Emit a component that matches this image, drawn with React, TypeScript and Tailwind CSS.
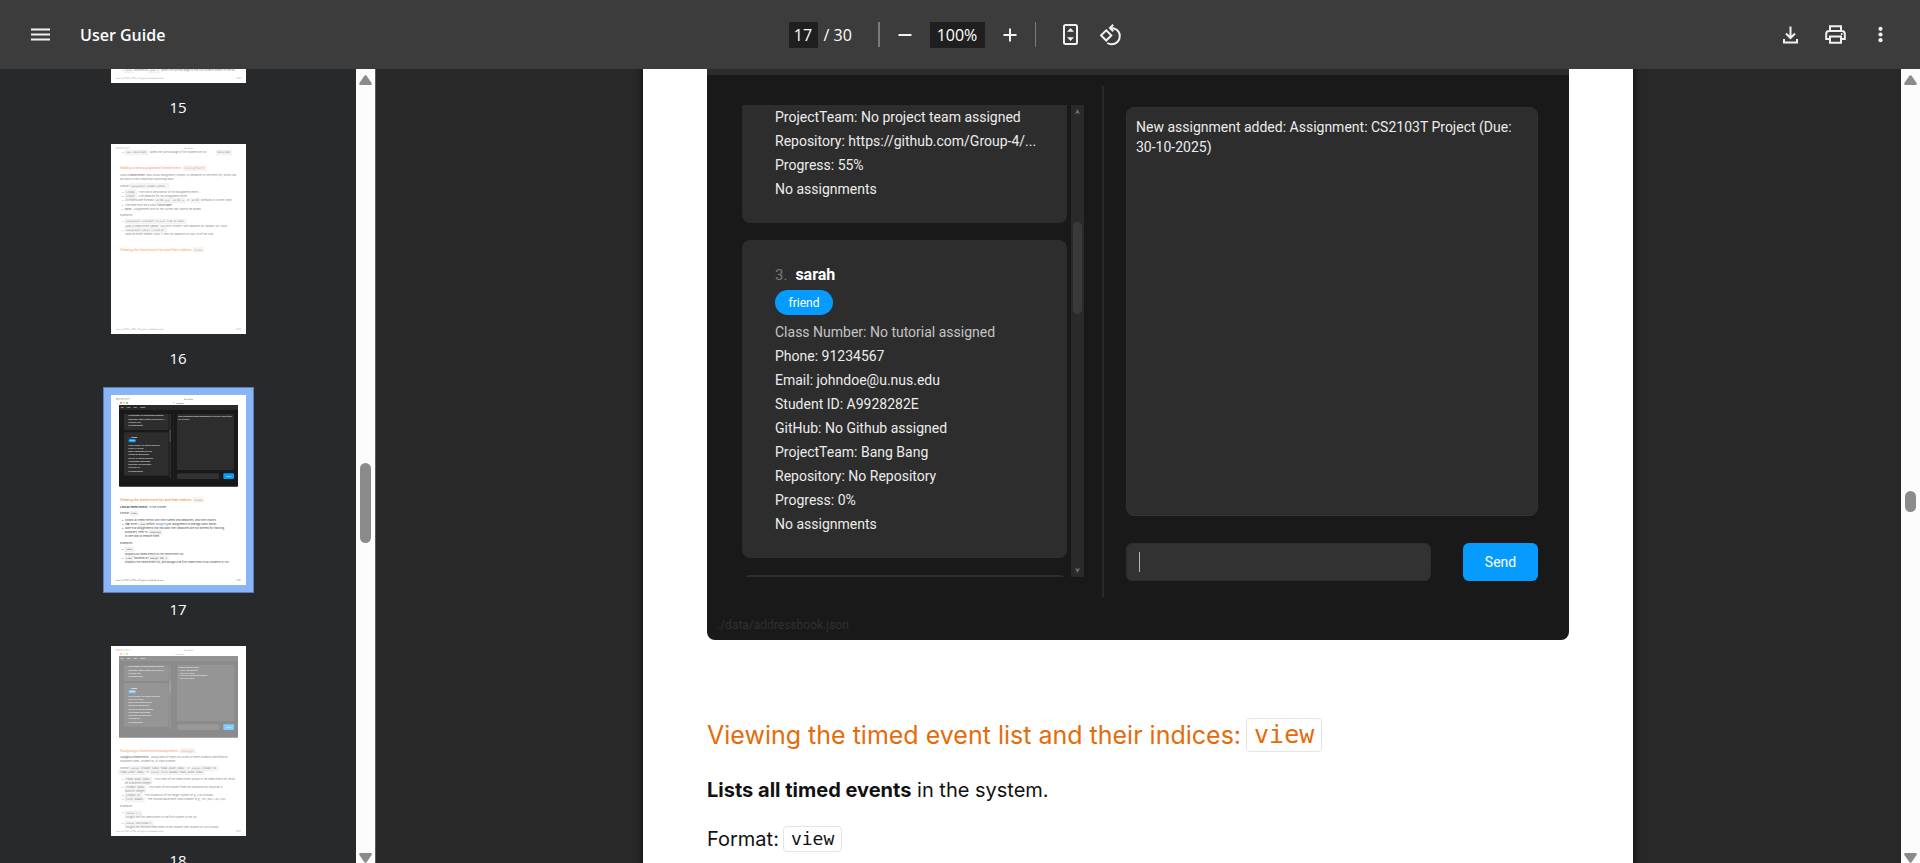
import type { ReactNode } from "react";

const UI_FONT = "font-['Segoe_UI','Open_Sans',sans-serif]";
const DOC_FONT = "font-['Inter',sans-serif]";
const APP_FONT = "font-['Roboto',sans-serif]";

/* ---------- toolbar ---------- */

function IconButton({ label, children, wide }: { label: string; children: ReactNode; wide?: boolean }) {
  return (
    <button
      type="button"
      aria-label={label}
      className={`flex h-10 items-center justify-center text-[#f1f1f1] ${wide ? "w-[45px]" : "w-10"}`}
    >
      {children}
    </button>
  );
}

function Toolbar() {
  return (
    <header className={`flex h-[69px] shrink-0 items-center bg-[#3c3c3c] text-base text-white ${UI_FONT}`}>
      <div className="flex flex-1 items-center gap-5 pl-5">
        <IconButton label="Menu">
          <svg width="19" height="13" viewBox="0 0 19 13" fill="currentColor">
            <rect x="0" y="0.5" width="19" height="2" />
            <rect x="0" y="5.5" width="19" height="2" />
            <rect x="0" y="10.5" width="19" height="2" />
          </svg>
        </IconButton>
        <h1 className="font-semibold">User Guide</h1>
      </div>

      <div className="flex items-center pr-1">
        <input
          aria-label="Page number"
          defaultValue="17"
          className="h-[26px] w-[29px] bg-[#1f1f1f] text-center outline-none"
        />
        <span className="w-[60px] pl-[6px]">/ 30</span>
        <span className="mr-[5px] h-[25px] w-[2px] bg-[#7a7a7a]" />
        <IconButton label="Zoom out">
          <svg width="14" height="14" viewBox="0 0 14 14" fill="currentColor">
            <rect x="0.5" y="6" width="13" height="2" />
          </svg>
        </IconButton>
        <input
          aria-label="Zoom level"
          defaultValue="100%"
          className="mx-[5px] h-[26px] w-[55px] bg-[#1f1f1f] text-center outline-none"
        />
        <IconButton label="Zoom in">
          <svg width="14" height="14" viewBox="0 0 14 14" fill="currentColor">
            <rect x="0.5" y="6" width="13" height="2" />
            <rect x="6" y="0.5" width="2" height="13" />
          </svg>
        </IconButton>
        <span className="mr-[15px] ml-[5px] h-[25px] w-px bg-[#7a7a7a]" />
        <IconButton label="Fit to page">
          <svg width="15" height="21" viewBox="0 0 15 21" fill="none">
            <rect x="1" y="1" width="13" height="19" rx="1.5" stroke="currentColor" strokeWidth="2" />
            <path d="M7.5 4 11 7.8H4ZM7.5 17 4 13.2h7Z" fill="currentColor" />
          </svg>
        </IconButton>
        <IconButton label="Rotate counterclockwise">
          <svg width="22" height="22" viewBox="0 0 22 22" fill="none" stroke="currentColor" strokeWidth="2">
            <path d="M6.2 6.3 11.3 11.4 6.2 16.5 1.1 11.4Z" />
            <path d="M10.5 3.9c5 0 9.3 3.1 9.3 8.1s-3.6 8.2-8.3 8.2c-1.6 0-2.9-.4-4.2-1.2" />
            <path d="M13.2 0.8 10 4 13.2 7.2" />
          </svg>
        </IconButton>
      </div>

      <div className="flex flex-1 items-center justify-end pr-[17px]">
        <IconButton label="Download" wide>
          <svg width="15" height="18" viewBox="0 0 15 18" fill="none" stroke="currentColor" strokeWidth="2">
            <path d="M7.5 0.5V11.5M3 7.5 7.5 12 12 7.5M1 13v3.5h13V13" />
          </svg>
        </IconButton>
        <IconButton label="Print" wide>
          <svg width="21" height="19" viewBox="0 0 21 19" fill="none" stroke="currentColor" strokeWidth="2">
            <path d="M5 6V1.2h11V6M5 14H1.2V9c0-1.7 1-3 2.8-3h13c1.8 0 2.8 1.3 2.8 3v5H16" />
            <path d="M5 11.5h11v6.2H5Z" />
            <circle cx="16.7" cy="8.9" r="1" fill="currentColor" stroke="none" />
          </svg>
        </IconButton>
        <IconButton label="More actions" wide>
          <svg width="5" height="17" viewBox="0 0 5 17" fill="currentColor">
            <circle cx="2.5" cy="2.8" r="2.1" />
            <circle cx="2.5" cy="8.5" r="2.1" />
            <circle cx="2.5" cy="14.2" r="2.1" />
          </svg>
        </IconButton>
      </div>
    </header>
  );
}

/* ---------- scroll bars ---------- */

function ScrollBar({ before, size, after }: { before: number; size: number; after: number }) {
  return (
    <div className="flex w-[19px] shrink-0 flex-col items-center bg-[#fcfcfc] pt-[6px]">
      <svg width="13" height="10" viewBox="0 0 13 10" fill="#8b8b8b">
        <path d="M5.6.6Q6.5-.3 7.4.6L12.6 8Q13.3 9.8 11.6 9.9H1.4Q-.3 9.8.4 8Z" />
      </svg>
      <div style={{ flexGrow: before }} />
      <div className="w-[11px] rounded-full bg-[#8b8b8b]" style={{ height: size }} />
      <div style={{ flexGrow: after }} />
      <svg width="13" height="10" viewBox="0 0 13 10" fill="#8b8b8b">
        <path d="M5.6 9.4Q6.5 10.3 7.4 9.4L12.6 2Q13.3.2 11.6.1H1.4Q-.3.2.4 2Z" />
      </svg>
    </div>
  );
}

/* ---------- thumbnails ---------- */

type Run = { x: number; y: number; t: string; mono?: boolean; bold?: boolean; w?: number; heading?: boolean };

function Runs({ runs, color, accent }: { runs: Run[]; color: string; accent: string }) {
  return (
    <>
      {runs.map((r, i) => (
        <g key={i}>
          {r.w ? (
            <rect x={r.x - 3} y={r.y - 9} width={r.w} height={13} rx="1" fill="#f6f6f6" stroke="#dedede" strokeWidth="1" />
          ) : null}
          <text
            x={r.x}
            y={r.y}
            fontSize={r.heading ? 10 : r.mono ? 7 : 8}
            fontWeight={r.bold ? 700 : r.heading ? 500 : 400}
            fontFamily={r.mono ? "DejaVu Sans Mono, monospace" : "Inter, sans-serif"}
            fill={r.heading ? accent : color}
          >
            {r.t}
          </text>
        </g>
      ))}
    </>
  );
}

function PageFrame({ page, children, faded }: { page: number; children: ReactNode; faded?: boolean }) {
  const c = faded ? "#999" : "#555";
  return (
    <svg width="135" height="190" viewBox="0 0 405 570" className="block bg-white" aria-hidden="true">
      <text x="15" y="15" fontSize="5" fill={c} fontFamily="Inter, sans-serif">09/11/2025, 16:22</text>
      <text x="220" y="15" fontSize="5" fill={c} fontFamily="Inter, sans-serif">User Guide</text>
      {children}
      <text x="15" y="558" fontSize="5" fill={c} fontFamily="Inter, sans-serif">https://ay2526s1-cs2103t-w11-4.github.io/tp/UserGuide.html</text>
      <text x="376" y="558" fontSize="5" fill={c} fontFamily="Inter, sans-serif">{`${page}/30`}</text>
    </svg>
  );
}

const contactLines = [
  "Class Number: No tutorial assigned",
  "Phone: 91234567",
  "Email: johndoe@u.nus.edu",
  "Student ID: A9928282E",
  "GitHub: No Github assigned",
  "ProjectTeam: Bang Bang",
  "Repository: No Repository",
  "Progress: 0%",
  "No assignments",
];

function MiniApp({ output, faded }: { output: string[]; faded?: boolean }) {
  return (
    <g fontFamily="Roboto, sans-serif" fontSize="6" opacity={faded ? 0.5 : 1}>
      <circle cx="30" cy="23.5" r="2.8" fill="#ff4f57" />
      <circle cx="39" cy="23.5" r="2.8" fill="#febc2e" />
      <circle cx="48" cy="23.5" r="2.8" fill="#28c840" />
      <circle cx="189" cy="23.5" r="2" fill="#e0b080" />
      <text x="195" y="26" fontSize="5" fill="#555">TeamBook</text>
      <rect x="24" y="30" width="357" height="245" rx="2" fill="#191919" />
      <rect x="24" y="30" width="357" height="15" fill="#2a2a2a" />
      <text x="29" y="39" fontSize="5" fill="#fff">File</text>
      <text x="47" y="39" fontSize="5" fill="#fff">View</text>
      <text x="67" y="39" fontSize="5" fill="#fff">Help</text>
      <text x="87" y="39" fontSize="5" fill="#fff">Theme</text>
      <path d="M39 57h134v44q0 4-4 4H43q-4 0-4-4Z" fill="#2d2d2d" />
      <rect x="39" y="112" width="134" height="130" rx="4" fill="#2d2d2d" />
      <rect x="175" y="57" width="5" height="192" fill="#2d2d2d" />
      <rect x="175" y="105" width="5" height="35" fill="#474747" />
      <rect x="188" y="50" width="1" height="205" fill="#333" />
      <rect x="198" y="57" width="171" height="168" rx="3" fill="#2d2d2d" />
      <rect x="198" y="235" width="126" height="17" rx="3" fill="#333" />
      <rect x="337" y="235" width="32" height="17" rx="3" fill="#069cff" />
      <text x="346" y="246" fill="#fff">Send</text>
      {["ProjectTeam: No project team assigned", "Repository: https://github.com/Group-4/…", "Progress: 55%", "No assignments"].map((t, i) => (
        <text key={t} x="52" y={64 + i * 9.6} fill="#eee">{t}</text>
      ))}
      <text x="53" y="128" fill="#888">3.</text>
      <text x="61" y="128" fill="#fff" fontWeight="700" fontSize="7">sarah</text>
      <rect x="52" y="132" width="23" height="10" rx="5" fill="#069cff" />
      <text x="57" y="139" fill="#fff" fontSize="5">friend</text>
      {contactLines.map((t, i) => (
        <text key={t} x="52" y={152 + i * 9.7} fill="#eee">{t}</text>
      ))}
      {output.map((t, i) => (
        <text key={t} x="202" y={67 + i * 8} fill="#eee" xmlSpace="preserve">{t}</text>
      ))}
    </g>
  );
}

function Thumb15() {
  return (
    <PageFrame page={15} faded>
      <Runs
        color="#888"
        accent="#f3a871"
        runs={[
          { x: 33, y: 535, t: "•" },
          { x: 44, y: 535, t: "list", mono: true, w: 25 },
          { x: 69, y: 535, t: "followed by" },
          { x: 116, y: 535, t: "open 1", mono: true, w: 32 },
          { x: 150, y: 535, t: "opens the GitHub page of the first student shown in the list." },
        ]}
      />
    </PageFrame>
  );
}

function Thumb16() {
  return (
    <PageFrame page={16} faded>
      <Runs
        color="#888"
        accent="#f3a871"
        runs={[
          { x: 33, y: 28, t: "•" },
          { x: 45, y: 28, t: "open A0123456M", mono: true, w: 69 },
          { x: 116, y: 28, t: "opens the GitHub page of the student with ID" },
          { x: 318, y: 28, t: "A0123456M", mono: true, w: 46 },
          { x: 27, y: 75, t: "Adding a new assignment/timed event:", heading: true },
          { x: 221, y: 75, t: "assignment", heading: true, mono: true, w: 69 },
          { x: 27, y: 96, t: "Adds a" },
          { x: 55, y: 96, t: "timed event", bold: true },
          { x: 104, y: 96, t: "(such as an assignment, project, or deadline) to the event list, which can" },
          { x: 27, y: 108, t: "be used to track important upcoming tasks." },
          { x: 27, y: 128, t: "Format:" },
          { x: 60, y: 128, t: "assignment n/NAME d/DATE", mono: true, w: 116 },
          { x: 33, y: 147, t: "•" },
          { x: 45, y: 147, t: "n/NAME", mono: true, w: 34 },
          { x: 79, y: 147, t: ": The title or description of the assignment/event." },
          { x: 33, y: 160, t: "•" },
          { x: 45, y: 160, t: "d/DATE", mono: true, w: 34 },
          { x: 79, y: 160, t: ": The deadline for the assignment/event." },
          { x: 33, y: 172, t: "•" },
          { x: 42, y: 172, t: "Accepted date formats:" },
          { x: 135, y: 172, t: "dd-MM-yyyy, dd-MM-yy", mono: true, w: 92 },
          { x: 228, y: 172, t: "or" },
          { x: 242, y: 172, t: "dd-MM", mono: true, w: 27 },
          { x: 269, y: 172, t: "(defaults to current year)." },
          { x: 33, y: 185, t: "•" },
          { x: 42, y: 185, t: "The date must be a valid" },
          { x: 139, y: 185, t: "future date.", bold: true },
          { x: 33, y: 197, t: "•" },
          { x: 42, y: 197, t: "Note:", bold: true },
          { x: 67, y: 197, t: "Assignments due on the current day cannot be added." },
          { x: 27, y: 217, t: "Examples:" },
          { x: 33, y: 235, t: "•" },
          { x: 45, y: 235, t: "assignment n/CS2103T Project d/30-01-2026", mono: true, w: 184 },
          { x: 42, y: 248, t: "Adds a timed event named “CS2103T Project” with deadline on January 30, 2026." },
          { x: 33, y: 260, t: "•" },
          { x: 45, y: 260, t: "assignment n/Quiz 1 d/10-04", mono: true, w: 125 },
          { x: 42, y: 274, t: "Adds an event named “Quiz 1” with the deadline on April 10 of the year." },
          { x: 27, y: 320, t: "Viewing the timed event list and their indices:", heading: true },
          { x: 250, y: 320, t: "view", heading: true, mono: true, w: 31 },
        ]}
      />
    </PageFrame>
  );
}

function Thumb17() {
  return (
    <PageFrame page={17}>
      <MiniApp output={["New assignment added: Assignment: CS2103T Project (Due:", "30-10-2025)"]} />
      <Runs
        color="#444"
        accent="#ec8a45"
        runs={[
          { x: 27, y: 317, t: "Viewing the timed event list and their indices:", heading: true },
          { x: 250, y: 317, t: "view", heading: true, mono: true, w: 31 },
          { x: 27, y: 338, t: "Lists all timed events", bold: true },
          { x: 115, y: 338, t: "in the system." },
          { x: 27, y: 358, t: "Format:" },
          { x: 60, y: 358, t: "view", mono: true, w: 25 },
          { x: 33, y: 378, t: "•" },
          { x: 42, y: 378, t: "Shows all timed events with their names and deadlines, and their indices." },
          { x: 33, y: 391, t: "•" },
          { x: 42, y: 391, t: "Tip:", bold: true },
          { x: 60, y: 391, t: "Enter" },
          { x: 85, y: 391, t: "view", mono: true, w: 23 },
          { x: 106, y: 391, t: "before" },
          { x: 172, y: 391, t: "an assignment to manage tasks easier." },
          { x: 33, y: 403, t: "•" },
          { x: 42, y: 403, t: "Note that assignments that has past their deadlines are not deleted for tracking" },
          { x: 42, y: 415, t: "purposes, refer to" },
          { x: 116, y: 415, t: "unassign", mono: true, w: 40 },
          { x: 42, y: 427, t: "to see how to remove them." },
          { x: 27, y: 447, t: "Examples:" },
          { x: 33, y: 466, t: "•" },
          { x: 45, y: 466, t: "view", mono: true, w: 25 },
          { x: 42, y: 479, t: "Displays all timed events in the timed event list." },
          { x: 33, y: 492, t: "•" },
          { x: 45, y: 492, t: "view", mono: true, w: 25 },
          { x: 69, y: 492, t: "followed by" },
          { x: 117, y: 492, t: "assign T01 1", mono: true, w: 58 },
          { x: 42, y: 504, t: "Displays the timed event list, and assigns the first timed event to all students in T01." },
        ]}
      />
      <text x="134" y="391" fontSize="8" fill="#3b7dd8" fontFamily="Inter, sans-serif">assigning</text>
    </PageFrame>
  );
}

function Thumb18() {
  return (
    <PageFrame page={18} faded>
      <MiniApp
        faded
        output={["Listed all timed events:", "1. Quiz 1: Assignment", "   Due: 01-04-2026", "2. CS2103T Project: Assignment", "   Due: 30-10-2025"]}
      />
      <Runs
        color="#888"
        accent="#f3a871"
        runs={[
          { x: 27, y: 317, t: "Assigning a timed event/assignment:", heading: true },
          { x: 211, y: 317, t: "assign", heading: true, mono: true, w: 43 },
          { x: 27, y: 337, t: "Assigns a timed event", bold: true },
          { x: 120, y: 337, t: "using index or event list to one or more students identified by" },
          { x: 27, y: 349, t: "displayed index, student ID, or class number." },
          { x: 27, y: 370, t: "Format:" },
          { x: 60, y: 370, t: "assign STUDENT_INDEX TIMED_EVENT_INDEX", mono: true, w: 168 },
          { x: 229, y: 370, t: "or" },
          { x: 243, y: 370, t: "assign STUDENT_ID", mono: true, w: 80 },
          { x: 27, y: 382, t: "TIMED_EVENT_INDEX", mono: true, w: 78 },
          { x: 106, y: 382, t: "or" },
          { x: 120, y: 382, t: "assign CLASS_NUMBER TIMED_EVENT_INDEX", mono: true, w: 164 },
          { x: 33, y: 403, t: "•" },
          { x: 45, y: 403, t: "TIMED_EVENT_INDEX", mono: true, w: 80 },
          { x: 127, y: 403, t: ": The index of the timed event shown in the timed event list (must" },
          { x: 42, y: 415, t: "be a positive integer)." },
          { x: 33, y: 427, t: "•" },
          { x: 45, y: 427, t: "STUDENT_INDEX", mono: true, w: 62 },
          { x: 109, y: 427, t: ": The index of the student from the displayed list (must be a" },
          { x: 42, y: 439, t: "positive integer)." },
          { x: 33, y: 451, t: "•" },
          { x: 45, y: 451, t: "STUDENT_ID", mono: true, w: 50 },
          { x: 97, y: 451, t: ": The student ID of the target student (e.g., A0123456N)." },
          { x: 33, y: 463, t: "•" },
          { x: 45, y: 463, t: "CLASS_NUMBER", mono: true, w: 58 },
          { x: 105, y: 463, t: ": The tutorial/lab/lecture class number (e.g., T01, R02, L10, L20)." },
          { x: 27, y: 483, t: "Examples:" },
          { x: 33, y: 502, t: "•" },
          { x: 45, y: 504, t: "assign 1 1", mono: true, w: 50 },
          { x: 42, y: 516, t: "Assigns the first timed event to the first student in the list." },
          { x: 33, y: 535, t: "•" },
          { x: 45, y: 535, t: "assign A0123456N 2", mono: true, w: 84 },
          { x: 42, y: 547, t: "Assigns the second timed event to the student with student ID A0123456N." },
        ]}
      />
    </PageFrame>
  );
}

function ThumbItem({ page, selected, children }: { page: number; selected?: boolean; children: ReactNode }) {
  return (
    <li className="flex h-[251px] shrink-0 flex-col items-center gap-3">
      <button
        type="button"
        aria-label={`Page ${page}`}
        className={selected ? "-m-2 bg-[#8ab4f8] p-2 ring-1 ring-[#5f7fae] ring-inset" : ""}
      >
        {children}
      </button>
      <span className="text-[15px] leading-6 text-white">{page}</span>
    </li>
  );
}

function Sidebar() {
  return (
    <aside className="flex min-h-0 w-[376px] shrink-0 border-r border-[#5a5a5a] bg-[#28292b]">
      <ul className={`flex min-w-0 flex-1 flex-col overflow-hidden ${UI_FONT}`}>
        <li className="flex shrink-0 flex-col items-center gap-3 pb-[25px]">
          <button type="button" aria-label="Page 15" className="flex h-[14px] items-end overflow-hidden">
            <Thumb15 />
          </button>
          <span className="text-[15px] leading-6 text-white">15</span>
        </li>
        <ThumbItem page={16}><Thumb16 /></ThumbItem>
        <ThumbItem page={17} selected><Thumb17 /></ThumbItem>
        <ThumbItem page={18}><Thumb18 /></ThumbItem>
      </ul>
      <ScrollBar before={378} size={80} after={310} />
    </aside>
  );
}

/* ---------- document page ---------- */

function AppScreenshot() {
  return (
    <section className={`flex flex-col overflow-hidden rounded-b-lg border-t-[6px] border-[#2c2c2c] bg-[#191919] text-sm text-[#ececec] ${APP_FONT}`}>
      <div className="flex h-[522px] pr-[31px] pl-[35px]">
        <div className="mt-[30px] flex h-[472px] w-[325px] flex-col overflow-hidden">
          <div className="shrink-0 rounded-b-lg bg-[#2d2d2d] px-[33px] pb-[22px] leading-6 whitespace-nowrap">
            <p>ProjectTeam: No project team assigned</p>
            <p>Repository: https://github.com/Group-4/...</p>
            <p>Progress: 55%</p>
            <p>No assignments</p>
          </div>
          <div className="mt-[17px] shrink-0 rounded-lg bg-[#2d2d2d] px-[33px] pt-[23px] pb-[22px] leading-6 whitespace-nowrap">
            <h3 className="flex items-baseline gap-2">
              <span className="text-[15px] leading-6 text-[#7b7b7b]">3.</span>
              <span className="text-base leading-6 font-bold text-white">sarah</span>
            </h3>
            <span className="mt-[3px] mb-[5px] flex h-[25px] w-[58px] items-center justify-center rounded-full bg-[#069cff] text-xs text-white">
              friend
            </span>
            {contactLines.map((line, i) => (
              <p key={line} className={i === 0 ? "text-[#c4c4c4]" : ""}>{line}</p>
            ))}
          </div>
          <div className="mt-[17px] h-10 shrink-0 rounded-lg bg-[#2d2d2d]" />
        </div>
        <div className="mt-[30px] ml-1 flex h-[472px] w-[13px] flex-col items-center bg-[#2a2a2a] py-1">
          <svg width="5" height="5" viewBox="0 0 5 5" fill="#707070"><path d="M2.5 0 5 5 2.5 4 0 5Z" /></svg>
          <div className="mt-[108px] h-[92px] w-[9px] rounded-full bg-[#3a3a3a]" />
          <svg className="mt-auto" width="5" height="5" viewBox="0 0 5 5" fill="#707070"><path d="M2.5 5 5 0 2.5 1 0 0Z" /></svg>
        </div>
        <div className="mt-[11px] ml-[18px] h-[511px] w-[2px] bg-[#2a2a2a]" />
        <div className="mt-8 ml-[22px] flex min-w-0 flex-1 flex-col">
          <div className="h-[409px] rounded-lg border border-[#333] bg-[#2d2d2d] px-[9px] py-[9px] leading-5">
            New assignment added: Assignment: CS2103T Project (Due: 30-10-2025)
          </div>
          <div className="mt-[27px] flex gap-8">
            <div className="flex h-[38px] min-w-0 flex-1 items-center rounded-md border border-[#2d2d2d] bg-[#323232] pl-3">
              <span className="h-5 w-px bg-[#b5b5b5]" />
              <input aria-label="Command" className="min-w-0 flex-1 bg-transparent outline-none" />
            </div>
            <button type="button" className="h-[38px] w-[75px] rounded-md bg-[#069cff] text-white">Send</button>
          </div>
        </div>
      </div>
      <p className="px-[10px] pt-[18px] pb-[5px] text-xs leading-5 text-[#303030]">./data/addressbook.json</p>
    </section>
  );
}

function DocumentPage() {
  return (
    <article className={`w-[990px] bg-white px-16 text-xl text-[#111] shadow-[0_0_5px_2px_rgba(0,0,0,0.5)] ${DOC_FONT}`}>
      <AppScreenshot />
      <h2 className="mt-[77px] flex items-center gap-[5px] text-[25px] leading-9 text-[#e46c0a]">
        Viewing the timed event list and their indices:
        <code className="rounded border border-[#e4e4e4] px-[7px] font-['DejaVu_Sans_Mono',monospace] text-[25px] leading-8">view</code>
      </h2>
      <p className="mt-[22px] leading-[30px]">
        <strong className="font-bold">Lists all timed events</strong> in the system.
      </p>
      <p className="mt-[19px] flex items-center gap-1 leading-[30px]">
        Format:
        <code className="rounded border border-[#e4e4e4] px-[7px] font-['DejaVu_Sans_Mono',monospace] text-[18px] leading-6">view</code>
      </p>
    </article>
  );
}

export default function App() {
  return (
    <div className="flex h-screen flex-col overflow-hidden bg-[#282828]">
      <Toolbar />
      <div className="flex min-h-0 flex-1">
        <Sidebar />
        <main className="flex min-w-0 flex-1 justify-center overflow-hidden pr-px">
          <DocumentPage />
        </main>
        <ScrollBar before={406} size={21} after={341} />
      </div>
    </div>
  );
}
